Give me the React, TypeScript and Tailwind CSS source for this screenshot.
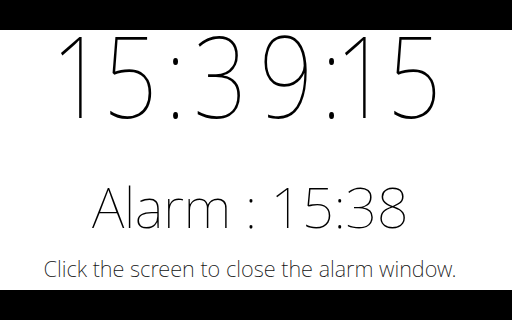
const clock: { ch: string; w: string }[] = [
  { ch: '1', w: 'w-[38px]' },
  { ch: '5', w: 'w-[66px]' },
  { ch: ':', w: 'w-[24px]' },
  { ch: '3', w: 'w-[66px]' },
  { ch: '9', w: 'w-[66px]' },
  { ch: ':', w: 'w-[24px]' },
  { ch: '1', w: 'w-[38px]' },
  { ch: '5', w: 'w-[66px]' },
];

export default function App() {
  return (
    <div className="w-[512px] h-[320px] flex flex-col bg-white overflow-hidden [font-family:'Noto_Sans',sans-serif]">
      <div className="h-[30px] bg-black shrink-0" />
      <div className="flex-1 flex flex-col items-center text-black">
        <div className="flex text-[113px] leading-none -mt-[12px] [font-weight:150] mr-[6px]">
          {clock.map((c, i) => (
            <span key={i} className={`${c.w} flex justify-center`}>
              <span className="inline-block scale-x-[0.84]">{c.ch}</span>
            </span>
          ))}
        </div>
        <div className="text-[56px] leading-none mt-[46.5px] [font-weight:150] tracking-[-0.5px] mr-[12px]">Alarm : 15:38</div>
        <div className="text-[21.8px] leading-none mt-[24px] [font-weight:250] text-[#111] mr-[12px]">Click the screen to close the alarm window.</div>
      </div>
      <div className="h-[30px] bg-black shrink-0" />
    </div>
  );
}
